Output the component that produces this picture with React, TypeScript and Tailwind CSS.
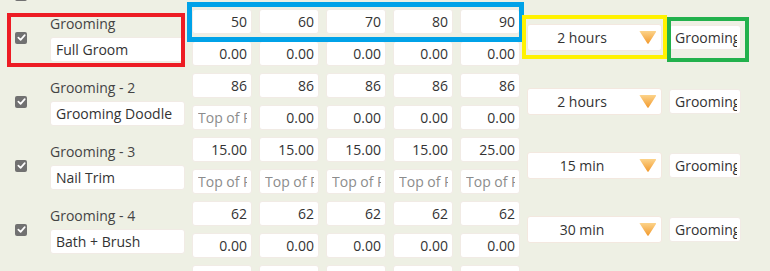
import React from "react";

type Service = {
  label: string;
  name: string;
  prices: string[];
  extras: string[];
  duration: string;
  category: string;
};

const services: Service[] = [
  {
    label: "Grooming",
    name: "Full Groom",
    prices: ["50", "60", "70", "80", "90"],
    extras: ["0.00", "0.00", "0.00", "0.00", "0.00"],
    duration: "2 hours",
    category: "Grooming",
  },
  {
    label: "Grooming - 2",
    name: "Grooming Doodle",
    prices: ["86", "86", "86", "86", "86"],
    extras: ["", "0.00", "0.00", "0.00", "0.00"],
    duration: "2 hours",
    category: "Grooming",
  },
  {
    label: "Grooming - 3",
    name: "Nail Trim",
    prices: ["15.00", "15.00", "15.00", "15.00", "25.00"],
    extras: ["", "", "", "", ""],
    duration: "15 min",
    category: "Grooming",
  },
  {
    label: "Grooming - 4",
    name: "Bath + Brush",
    prices: ["62", "62", "62", "62", "62"],
    extras: ["0.00", "0.00", "0.00", "0.00", "0.00"],
    duration: "30 min",
    category: "Grooming",
  },
  {
    label: "Grooming - 5",
    name: "Teeth Cleaning",
    prices: ["20", "20", "20", "20", "20"],
    extras: ["0.00", "0.00", "0.00", "0.00", "0.00"],
    duration: "15 min",
    category: "Grooming",
  },
];

function Check() {
  return (
    <div className="w-[12px] h-[12px] shrink-0 rounded-[2px] bg-[#717171] flex items-center justify-center">
      <svg width="9" height="9" viewBox="0 0 10 10" fill="none">
        <path d="M1.5 5.2 L4 7.6 L8.6 2.4" stroke="white" strokeWidth="1.9" strokeLinecap="round" strokeLinejoin="round" />
      </svg>
    </div>
  );
}

const inputCls =
  "h-[25px] bg-white border border-[#f1ebe5] rounded-[3px] outline-none text-[#333] placeholder-[#8c8c8c]";

function PriceCell({ value }: { value: string }) {
  return (
    <input
      readOnly
      defaultValue={value}
      placeholder="Top of Range"
      className={`${inputCls} w-[60px] pl-[5px] pr-[4px] ${value ? "text-right" : "text-left"}`}
    />
  );
}

function Row({ s }: { s: Service }) {
  return (
    <div className="flex items-center pl-[15px] pt-[4px] pb-[3px]">
      <Check />
      <div className="ml-[23px] w-[135px] flex flex-col gap-[3px]">
        <div className="h-[20px] leading-[20px] text-[#444] whitespace-nowrap">{s.label}</div>
        <input readOnly defaultValue={s.name} className={`${inputCls} w-[135px] px-[5px]`} />
      </div>
      <div className="ml-[7px] grid grid-cols-5 gap-[7px]">
        {s.prices.map((p, i) => (
          <PriceCell key={"p" + i} value={p} />
        ))}
        {s.extras.map((p, i) => (
          <PriceCell key={"e" + i} value={p} />
        ))}
      </div>
      <div className="ml-[7px] relative w-[135px] h-[27px] bg-white border border-[#f3e8df] rounded-[3px] flex items-center">
        <span className="w-full pr-[25px] text-center text-[#333]">{s.duration}</span>
        <svg className="absolute right-[4px] top-[6px]" width="18" height="13" viewBox="0 0 18 13">
          <defs>
            <linearGradient id="arr" x1="0" y1="0" x2="0" y2="1">
              <stop offset="0" stopColor="#fcd38a" />
              <stop offset="1" stopColor="#f29a2e" />
            </linearGradient>
          </defs>
          <path d="M0.5 1 Q0.5 0 1.8 0 L16.2 0 Q17.5 0 17 1 L9.6 12.4 Q9 13 8.4 12.4 L1 1 Z" fill="url(#arr)" />
        </svg>
      </div>
      <input
        readOnly
        defaultValue={s.category}
        className={`${inputCls} ml-[7px] w-[72px] pl-[5px] pr-[3px]`}
      />
    </div>
  );
}

export default function App() {
  return (
    <div className="relative min-h-screen overflow-hidden bg-[#eef0e4] font-['Open_Sans',sans-serif] text-[14px] text-[#333]">
      {/* section header, mostly scrolled out of view */}
      <div className="-mt-[16px] h-[21px] flex items-center pl-[15px]">
        <Check />
        <span className="ml-[23px] leading-[21px] text-[#444]">Wash Stations</span>
      </div>

      {services.map((s, i) => (
        <Row key={i} s={s} />
      ))}

      {/* annotation boxes */}
      <div className="absolute left-[7px] top-[13px] w-[178px] h-[54px] border-4 border-[#ed1c24]" />
      <div className="absolute left-[187px] top-[2px] w-[337px] h-[40px] border-[5px] border-[#00a2e8]" />
      <div className="absolute left-[522px] top-[15px] w-[145px] h-[44px] border-4 border-[#fff200]" />
      <div className="absolute left-[667px] top-[17px] w-[82px] h-[45px] border-4 border-[#22b14c]" />
    </div>
  );
}
